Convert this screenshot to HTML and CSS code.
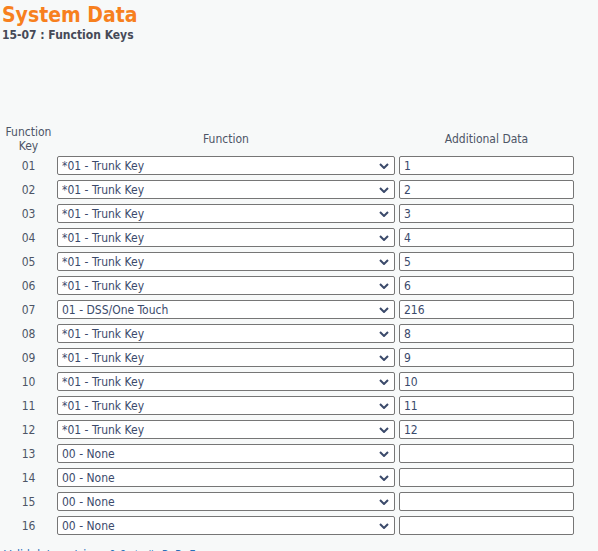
FILE: index.html
```html
<!DOCTYPE html>
<html lang="en">
<head>
  <meta charset="UTF-8">
  <title>System Data</title>
  <link rel="stylesheet" href="styles.css">
</head>
<body>

  <div class="page">
    <h1 class="title">System Data</h1>
    <h2 class="subtitle">15-07 : Function Keys</h2>

    <table class="keys">
      <thead>
        <tr>
          <th class="col-key">Function<br>Key</th>
          <th class="col-func">Function</th>
          <th class="col-data">Additional Data</th>
        </tr>
      </thead>
      <tbody id="rows"></tbody>
    </table>

    <p class="note">Valid data entries : 0-9, *, #, P, R, F</p>
  </div>

  <script>
    const keys = [
      ['*01 - Trunk Key', '1'],
      ['*01 - Trunk Key', '2'],
      ['*01 - Trunk Key', '3'],
      ['*01 - Trunk Key', '4'],
      ['*01 - Trunk Key', '5'],
      ['*01 - Trunk Key', '6'],
      ['01 - DSS/One Touch', '216'],
      ['*01 - Trunk Key', '8'],
      ['*01 - Trunk Key', '9'],
      ['*01 - Trunk Key', '10'],
      ['*01 - Trunk Key', '11'],
      ['*01 - Trunk Key', '12'],
      ['00 - None', ''],
      ['00 - None', ''],
      ['00 - None', ''],
      ['00 - None', '']
    ];

    const tbody = document.getElementById('rows');
    keys.forEach(function (k, i) {
      const num = String(i + 1).padStart(2, '0');
      const tr = document.createElement('tr');
      tr.innerHTML =
        '<td class="num">' + num + '</td>' +
        '<td><div class="select-wrap"><select class="select"><option>' + k[0] + '</option></select>' +
        '<svg class="chevron" viewBox="0 0 10 6" width="10" height="6"><path d="M1 1 L5 5 L9 1" fill="none" stroke="#3b4a6b" stroke-width="2"/></svg></div></td>' +
        '<td><input class="data" type="text" value="' + k[1] + '"></td>';
      tbody.appendChild(tr);
    });
  </script>

</body>
</html>
```

FILE: styles.css
```css
body {
  margin: 0;
  font-family: "DejaVu Sans Condensed", "DejaVu Sans", sans-serif;
  background-color: #f7f9f9;
  color: #4d5566;
}

.page {
  padding: 2px 2px 0 2px;
}

.title {
  margin: 0;
  font-size: 21px;
  line-height: 26px;
  font-weight: bold;
  color: #f7801e;
}

.subtitle {
  margin: 0;
  font-size: 12px;
  line-height: 14px;
  font-weight: bold;
  color: #464a57;
}

.keys {
  margin-top: 80px;
  border-collapse: separate;
  border-spacing: 4px 3px;
  margin-left: -2px;
}

.keys th {
  font-weight: normal;
  font-size: 12px;
  line-height: 14px;
  color: #4d5566;
  vertical-align: middle;
  padding: 0;
}

.keys td {
  padding: 0 0 2px 0;
}

.col-key {
  width: 49px;
}

.num {
  text-align: center;
  font-size: 12px;
  color: #4d5566;
}

.select-wrap {
  position: relative;
  width: 338px;
}

.select {
  -webkit-appearance: none;
  appearance: none;
  display: block;
  width: 338px;
  height: 19px;
  margin: 0;
  padding: 0 0 0 4px;
  font-family: inherit;
  font-size: 12px;
  color: #3b4a6b;
  background: #fff;
  border: 1px solid #767676;
  border-radius: 2px;
}

.chevron {
  position: absolute;
  right: 6px;
  top: 7px;
  pointer-events: none;
}

.data {
  display: block;
  width: 175px;
  height: 19px;
  box-sizing: border-box;
  margin: 0;
  padding: 0 0 0 4px;
  font-family: inherit;
  font-size: 12px;
  color: #3b4a6b;
  background: #fff;
  border: 1px solid #767676;
  border-radius: 2px;
}

.note {
  margin: 8px 0 0 2px;
  font-size: 12px;
  line-height: 14px;
  color: #2a6fb8;
}
```
